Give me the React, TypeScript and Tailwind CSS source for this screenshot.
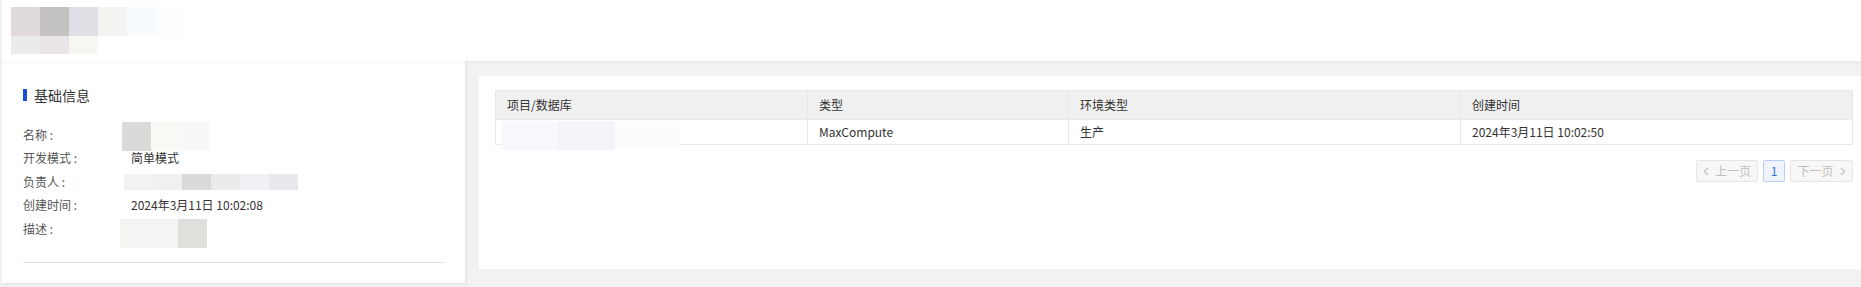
import React from "react";

const font = { fontFamily: '"Noto Sans CJK SC", "Noto Sans", sans-serif' };

// 打码的像素块
function Blur({ colors, w, h }: { colors: string[]; w: string; h: string }) {
  return (
    <div className="flex">
      {colors.map((c, i) => (
        <div key={i} className={`${w} ${h}`} style={{ backgroundColor: c }} />
      ))}
    </div>
  );
}

const infoRows = [
  { label: "名称 :", kind: "name" },
  { label: "开发模式 :", value: "简单模式" },
  { label: "负责人 :", kind: "owner" },
  { label: "创建时间 :", value: "2024年3月11日 10:02:08" },
  { label: "描述 :", kind: "desc" },
];

function InfoValue({ row }: { row: (typeof infoRows)[number] }) {
  if (row.kind === "name") {
    return (
      <div className="-ml-[9px] -mt-[1px] self-start">
        <Blur colors={["#dcdad8", "#faf9f5", "#f9f8f6"]} w="w-[29px]" h="h-[29px]" />
      </div>
    );
  }
  if (row.kind === "owner") {
    return (
      <div className="-ml-[7px]">
        <Blur
          colors={["#f3f3f5", "#f1f0ef", "#dcd9db", "#ebebed", "#f0f1f5", "#e9e8ec"]}
          w="w-[29px]"
          h="h-[16px]"
        />
      </div>
    );
  }
  if (row.kind === "desc") {
    return (
      <div className="-ml-[11px] mt-[2px] self-start">
        <Blur colors={["#f4f4f3", "#f4f4f3", "#e1dfdb"]} w="w-[29px]" h="h-[29px]" />
      </div>
    );
  }
  return <span className="text-[#333]">{row.value}</span>;
}

export default function App() {
  return (
    <div className="w-[1861px] h-[287px] overflow-hidden bg-[#f2f2f2] pl-[2px] text-[12px]" style={font}>
      {/* 顶部 */}
      <div className="h-[61px] bg-white pt-[7px] pl-[9px] shadow-[0_2px_4px_rgba(0,0,0,0.04)] relative z-10">
        <Blur colors={["#e0d9dd", "#c4c2c0", "#dfdfe6", "#f3f3f1", "#f8fbfd", "#fdfdfd"]} w="w-[29px]" h="h-[29px]" />
        <Blur colors={["#ebebea", "#e8e4e7", "#f6f7f2"]} w="w-[29px]" h="h-[18px]" />
      </div>

      <div className="flex items-start">
        {/* 基础信息 */}
        <div className="w-[463px] h-[222px] bg-white pl-[21px] pr-[20px] pt-[28px] shadow-[1px_1px_3px_rgba(0,0,0,0.08)]">
          <div className="flex items-center h-[12px]">
            <div className="w-[4px] h-[12px] bg-[#1b4fd8]" />
            <span className="ml-[7px] text-[14px] text-[#333] leading-none">基础信息</span>
          </div>
          <div className="mt-[22px]">
            {infoRows.map((row) => (
              <div key={row.label} className="flex items-center h-[23.5px]">
                <span className="w-[108px] text-[#555] shrink-0">{row.label}</span>
                <div className="flex items-center h-full">
                  <InfoValue row={row} />
                </div>
              </div>
            ))}
          </div>
          <div className="mt-[21px] h-px bg-[#e2e2ec]" />
        </div>

        {/* 项目列表 */}
        <div className="ml-[14px] mt-[15px] flex-1 h-[193px] bg-white pt-[14px] pl-[16px] pr-[8px]">
          <table className="w-full border-collapse table-fixed text-left">
            <colgroup>
              <col className="w-[312px]" />
              <col className="w-[261px]" />
              <col className="w-[392px]" />
              <col />
            </colgroup>
            <thead>
              <tr className="h-[29px] bg-[#f0f0f0] text-[#333]">
                <th className="font-normal px-[11px] border border-[#e8e8e8]">项目/数据库</th>
                <th className="font-normal px-[11px] border border-[#e8e8e8] border-l-0">类型</th>
                <th className="font-normal px-[11px] border border-[#e8e8e8] border-l-0">环境类型</th>
                <th className="font-normal px-[11px] border border-[#e8e8e8] border-l-0">创建时间</th>
              </tr>
            </thead>
            <tbody>
              <tr className="h-[25px] text-[#333]">
                <td className="px-[5px] border border-[#e8e8e8] relative">
                  <div className="absolute left-[5px] top-[1px]">
                    <Blur colors={["#f8f9fc", "#f4f5f9"]} w="w-[57px]" h="h-[29px]" />
                  </div>
                  <div className="absolute left-[119px] top-[1px] w-[66px] h-[29px] bg-[#fcfcfd]" />
                </td>
                <td className="px-[11px] border border-[#e8e8e8]">MaxCompute</td>
                <td className="px-[11px] border border-[#e8e8e8]">生产</td>
                <td className="px-[11px] border border-[#e8e8e8]">2024年3月11日 10:02:50</td>
              </tr>
            </tbody>
          </table>

          <div className="flex justify-end gap-[5px] mt-[15px]">
            <button className="w-[62px] h-[22px] flex items-center justify-center gap-[6px] bg-[#f7f7f7] border border-[#e6e6e6] text-[#bfbfbf] rounded-[2px]">
              <svg width="6" height="9" viewBox="0 0 6 9" fill="none">
                <path d="M5 1L1.5 4.5L5 8" stroke="#c4c4c4" strokeWidth="1.4" />
              </svg>
              <span>上一页</span>
            </button>
            <button className="w-[22px] h-[22px] flex items-center justify-center bg-[#eef3fe] border border-[#b9cbf7] text-[#3b6ee6] rounded-[2px]">
              1
            </button>
            <button className="w-[63px] h-[22px] flex items-center justify-center gap-[6px] bg-[#f7f7f7] border border-[#e6e6e6] text-[#bfbfbf] rounded-[2px]">
              <span>下一页</span>
              <svg width="6" height="9" viewBox="0 0 6 9" fill="none">
                <path d="M1 1L4.5 4.5L1 8" stroke="#c4c4c4" strokeWidth="1.4" />
              </svg>
            </button>
          </div>
        </div>
      </div>
    </div>
  );
}
